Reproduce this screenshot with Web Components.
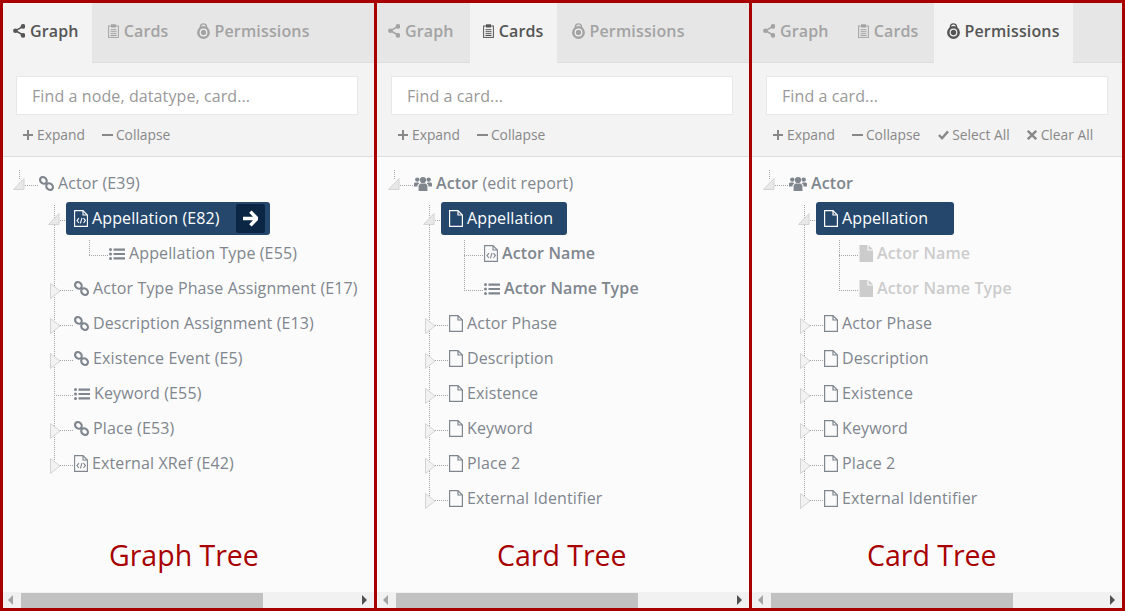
<!DOCTYPE html>
<html lang="en">
<head>
<meta charset="utf-8">
<title>Graph and card trees</title>
<style>
  html, body { margin: 0; background: #a80000; }
  body { font-family: "Open Sans", "Liberation Sans", sans-serif; }
</style>
</head>
<body>
<tree-compare>
  <tree-panel first caption="Graph Tree" style="--caption-x: 106px">
    <tab-item slot="tabs" icon="share" active first>Graph</tab-item>
    <tab-item slot="tabs" icon="clipboard">Cards</tab-item>
    <tab-item slot="tabs" icon="lock">Permissions</tab-item>
    <search-box slot="search" placeholder="Find a node, datatype, card..."></search-box>
    <action-link slot="actions" icon="plus">Expand</action-link>
    <action-link slot="actions" icon="minus">Collapse</action-link>
    <tree-node root toggle="open" icon="link">Actor (E39)
      <tree-node slot="kids" toggle="open" icon="code" selected go>Appellation (E82)
        <tree-node slot="kids" icon="list">Appellation Type (E55)</tree-node>
      </tree-node>
      <tree-node slot="kids" toggle="closed" icon="link">Actor Type Phase Assignment (E17)</tree-node>
      <tree-node slot="kids" toggle="closed" icon="link">Description Assignment (E13)</tree-node>
      <tree-node slot="kids" toggle="closed" icon="link">Existence Event (E5)</tree-node>
      <tree-node slot="kids" icon="list">Keyword (E55)</tree-node>
      <tree-node slot="kids" toggle="closed" icon="link">Place (E53)</tree-node>
      <tree-node slot="kids" toggle="closed" icon="code">External XRef (E42)</tree-node>
    </tree-node>
  </tree-panel>

  <tree-panel caption="Card Tree" style="--caption-x: 119px; --box-pad: 14px">
    <tab-item slot="tabs" icon="share" first>Graph</tab-item>
    <tab-item slot="tabs" icon="clipboard" active>Cards</tab-item>
    <tab-item slot="tabs" icon="lock">Permissions</tab-item>
    <search-box slot="search" placeholder="Find a card..."></search-box>
    <action-link slot="actions" icon="plus">Expand</action-link>
    <action-link slot="actions" icon="minus">Collapse</action-link>
    <tree-node root toggle="open" icon="users"><b>Actor</b> (edit report)
      <tree-node slot="kids" toggle="open" icon="file" selected>Appellation
        <tree-node slot="kids" icon="code"><b>Actor Name</b></tree-node>
        <tree-node slot="kids" icon="list"><b>Actor Name Type</b></tree-node>
      </tree-node>
      <tree-node slot="kids" toggle="closed" icon="file">Actor Phase</tree-node>
      <tree-node slot="kids" toggle="closed" icon="file">Description</tree-node>
      <tree-node slot="kids" toggle="closed" icon="file">Existence</tree-node>
      <tree-node slot="kids" toggle="closed" icon="file">Keyword</tree-node>
      <tree-node slot="kids" toggle="closed" icon="file">Place 2</tree-node>
      <tree-node slot="kids" toggle="closed" icon="file">External Identifier</tree-node>
    </tree-node>
  </tree-panel>

  <tree-panel caption="Card Tree" style="--caption-x: 114px; --box-pad: 26px">
    <tab-item slot="tabs" icon="share" first>Graph</tab-item>
    <tab-item slot="tabs" icon="clipboard">Cards</tab-item>
    <tab-item slot="tabs" icon="lock" active>Permissions</tab-item>
    <search-box slot="search" placeholder="Find a card..."></search-box>
    <action-link slot="actions" icon="plus">Expand</action-link>
    <action-link slot="actions" icon="minus">Collapse</action-link>
    <action-link slot="actions" icon="check">Select All</action-link>
    <action-link slot="actions" icon="cross">Clear All</action-link>
    <tree-node root toggle="open" icon="users"><b>Actor</b>
      <tree-node slot="kids" toggle="open" icon="file" selected>Appellation
        <tree-node slot="kids" icon="solid" muted><b>Actor Name</b></tree-node>
        <tree-node slot="kids" icon="solid" muted><b>Actor Name Type</b></tree-node>
      </tree-node>
      <tree-node slot="kids" toggle="closed" icon="file">Actor Phase</tree-node>
      <tree-node slot="kids" toggle="closed" icon="file">Description</tree-node>
      <tree-node slot="kids" toggle="closed" icon="file">Existence</tree-node>
      <tree-node slot="kids" toggle="closed" icon="file">Keyword</tree-node>
      <tree-node slot="kids" toggle="closed" icon="file">Place 2</tree-node>
      <tree-node slot="kids" toggle="closed" icon="file">External Identifier</tree-node>
    </tree-node>
  </tree-panel>
</tree-compare>

<script>
const pageOutline = 'M.6 .6H9L13.4 5V16.4H.6Z';
const icons = {
  share: [12, 14, `<path d="M10 2.5 2.5 6.7 10 11" fill="none" stroke="currentColor" stroke-width="1.5"/>
    <circle cx="10" cy="2.4" r="2.3" fill="currentColor"/><circle cx="2.4" cy="6.7" r="2.3" fill="currentColor"/><circle cx="10" cy="11.4" r="2.3" fill="currentColor"/>`],
  clipboard: [11, 14, `<rect x=".6" y="2" width="9.8" height="11.4" fill="none" stroke="currentColor"/>
    <rect x="3" y=".3" width="5" height="3.2" fill="currentColor"/>
    <path d="M2.5 5.7H8.5M2.5 7.7H8.5M2.5 9.7H8.5M2.5 11.5H8.5" stroke="currentColor"/>`],
  lock: [13, 16, `<path d="M3.4 6V4a3.1 3.1 0 0 1 6.2 0V6" fill="none" stroke="currentColor" stroke-width="1.4"/>
    <circle cx="6.5" cy="9.5" r="6.4" fill="currentColor"/><circle cx="6.5" cy="9.5" r="3.9" fill="#f3f3f3"/><circle cx="6.5" cy="9.5" r="2.7" fill="currentColor"/>`],
  link: [15, 15, `<g fill="none" stroke="currentColor" stroke-width="2.2">
    <ellipse cx="4.4" cy="4.4" rx="3.6" ry="3" transform="rotate(45 4.4 4.4)"/>
    <ellipse cx="10.6" cy="10.6" rx="3.6" ry="3" transform="rotate(45 10.6 10.6)"/>
    <path d="M6.8 6.8 8.2 8.2"/></g>`],
  code: [14, 17, `<path d="${pageOutline}M9 .6V5H13.4" fill="none" stroke="currentColor" stroke-width="1.1"/>
    <path d="M4.9 8.2 3 10.6 4.9 13M9.5 8.2 11.4 10.6 9.5 13M8 7.8 6.4 13.4" fill="none" stroke="currentColor" stroke-width="1.1"/>`],
  file: [14, 17, `<path d="${pageOutline}M9 .6V5H13.4" fill="none" stroke="currentColor" stroke-width="1.2"/>`],
  solid: [14, 17, `<path d="M.5 0H8.4V5.6H14V17H.5ZM9.6 0 14 4.4H9.6Z" fill="currentColor"/>`],
  list: [16, 12, `<circle cx="1.5" cy="1.6" r="1.5" fill="currentColor"/><circle cx="1.5" cy="6" r="1.5" fill="currentColor"/><circle cx="1.5" cy="10.4" r="1.5" fill="currentColor"/>
    <path d="M4.5 1.6H16M4.5 6H16M4.5 10.4H16" stroke="currentColor" stroke-width="2.2"/>`],
  users: [18, 15, `<g fill="currentColor"><circle cx="9" cy="4" r="3.1"/><circle cx="3.3" cy="3.6" r="2.2"/><circle cx="14.7" cy="3.6" r="2.2"/>
    <path d="M4.6 15V10.4C4.6 8.4 6 7.4 7 7.4H11C12 7.4 13.4 8.4 13.4 10.4V15Z"/>
    <path d="M0 10.5V8C0 6.8 1 6.4 1.8 6.4H4.4C4.6 7 5 7.3 5.4 7.5 4 8 3.4 9.2 3.4 10.5ZM18 10.5V8C18 6.8 17 6.4 16.2 6.4H13.6C13.4 7 13 7.3 12.6 7.5 14 8 14.6 9.2 14.6 10.5Z"/></g>`],
  plus: [10, 10, `<path d="M5 0V10M0 5H10" stroke="currentColor" stroke-width="2"/>`],
  minus: [11, 10, `<path d="M0 5H11" stroke="currentColor" stroke-width="2"/>`],
  check: [11, 10, `<path d="M1 5 4 8.2 10 1.4" fill="none" stroke="currentColor" stroke-width="2.4"/>`],
  cross: [10, 10, `<path d="M.8 .8 9.2 9.2M9.2 .8 .8 9.2" stroke="currentColor" stroke-width="2.3"/>`],
  arrow: [16, 17, `<path d="M8.4 1.6 15 8.5 8.4 15.4M14 8.5H1" fill="none" stroke="currentColor" stroke-width="3.4"/>`]
};

class UiIcon extends HTMLElement {
  connectedCallback() {
    const [w, h, body] = icons[this.getAttribute('name')];
    this.attachShadow({ mode: 'open' }).innerHTML = `
      <style>:host { display: block; flex: none; line-height: 0; }</style>
      <svg width="${w}" height="${h}" viewBox="0 0 ${w} ${h}">${body}</svg>`;
  }
}

class TabItem extends HTMLElement {
  connectedCallback() {
    this.attachShadow({ mode: 'open' }).innerHTML = `
      <style>
        :host { display: flex; align-items: center; height: 60px; margin-bottom: -1px; padding: 0 13px 5px 13px; box-sizing: border-box;
          font-size: 16px; font-weight: 600; letter-spacing: .15px; color: #a3a3a3; cursor: pointer; }
        :host([first]) { padding-left: 10px; margin-right: 3px; }
        :host([active]) { background: #f3f3f3; color: #555; height: 61px; padding-bottom: 6px; }
        :host(:not([first])) { margin-right: 2px; }
        ui-icon { margin-right: 5px; }
      </style>
      <ui-icon name="${this.getAttribute('icon')}"></ui-icon><slot></slot>`;
  }
}

class SearchBox extends HTMLElement {
  connectedCallback() {
    this.attachShadow({ mode: 'open' }).innerHTML = `
      <style>
        :host { display: block; }
        input { display: block; width: 100%; height: 39px; box-sizing: border-box; padding: 0 15px; border: 1px solid #e8e8e8; background: #fff;
          font: 16px "Open Sans", "Liberation Sans", sans-serif; letter-spacing: .1px; color: #555; outline: none; }
        input::placeholder { color: #999; opacity: 1; }
      </style>
      <input type="text" placeholder="${this.getAttribute('placeholder')}">`;
  }
}

class ActionLink extends HTMLElement {
  connectedCallback() {
    this.attachShadow({ mode: 'open' }).innerHTML = `
      <style>
        :host { display: flex; align-items: center; gap: 4px; font-size: 13.8px; color: #888; cursor: pointer; }
        :host([icon="minus"]), :host([icon="check"]) { gap: 3px; }
        :host([icon="check"]) { margin-left: 1px; }
        span { margin-bottom: 2px; }
      </style>
      <ui-icon name="${this.getAttribute('icon')}"></ui-icon><span><slot></slot></span>`;
  }
}

class TreeNode extends HTMLElement {
  connectedCallback() {
    const toggle = this.getAttribute('toggle');
    const isRoot = this.hasAttribute('root');
    const shape = toggle === 'open'
      ? '<path d="M.5 23.5 11 12.5V23.5Z" fill="#e8e8e8" stroke="#d4d4d4"/>'
      : toggle === 'closed' ? '<path d="M2.5 12.5 12 20 2.5 27.5Z" fill="#f2f2f2" stroke="#d4d4d4"/>' : '';
    this.attachShadow({ mode: 'open' }).innerHTML = `
      <style>
        :host { display: block; color: #7f868e; font-size: 16px; letter-spacing: .12px; }
        :host([muted]) { color: #ccc; }
        .row { display: flex; align-items: center; height: 35px; white-space: nowrap; }
        .gutter { flex: none; margin-left: -6px; }
        .label { display: flex; align-items: center; gap: 4px; }
        .text { margin-bottom: 2px; }
        :host([selected]) .label { height: 33px; margin-left: -8px; padding: 0 var(--box-pad, 25px) 0 8px; background: #25476b; border-radius: 3px; color: #fff; }
        :host([go]) .label { padding-right: 5px; }
        .go { display: flex; align-items: center; justify-content: center; width: 29px; height: 29px; margin-left: 12px; background: #0b2644; border-radius: 2px; }
        ::slotted(b) { font-weight: 600; }
        .kids { margin-left: 35px; background: repeating-linear-gradient(#a5a5a5 0 1px, transparent 1px 2px) 0 4px / 1px calc(100% - 20px) no-repeat; }
      </style>
      <div class="row">
        <svg class="gutter" width="26" height="35" viewBox="0 0 26 35">
          ${isRoot ? '<path d="M6.5 4V13" stroke="#a5a5a5" stroke-dasharray="1 1"/>' : ''}
          <path d="M6 19.5H26" stroke="#a5a5a5" stroke-dasharray="1 1"/>
          ${shape}
        </svg>
        <div class="label">
          <ui-icon name="${this.getAttribute('icon')}"></ui-icon>
          <span class="text"><slot></slot></span>
          ${this.hasAttribute('go') ? '<div class="go"><ui-icon name="arrow"></ui-icon></div>' : ''}
        </div>
      </div>
      <div class="kids"><slot name="kids"></slot></div>`;
  }
}

class PanelScrollbar extends HTMLElement {
  connectedCallback() {
    this.attachShadow({ mode: 'open' }).innerHTML = `
      <style>
        :host { display: flex; align-items: center; height: 16px; background: #f1f1f1; flex: none; }
        .left { margin-left: calc(5px + var(--lead)); border: 5px solid transparent; border-right: 5px solid #a3a3a3; border-left: 0; }
        .thumb { margin-left: 8px; width: 242px; height: 15px; align-self: flex-end; background: #c1c1c1; }
        .right { margin-left: auto; margin-right: 7px; border: 5px solid transparent; border-left: 5px solid #505050; border-right: 0; }
      </style>
      <div class="left"></div><div class="thumb"></div><div class="right"></div>`;
  }
}

class TreePanel extends HTMLElement {
  connectedCallback() {
    this.attachShadow({ mode: 'open' }).innerHTML = `
      <style>
        :host { display: flex; flex-direction: column; min-width: 0; height: 605px; box-sizing: border-box;
          border-left: 3px solid #a80000; background: #fbfbfb; --lead: 1px; }
        :host([first]) { --lead: 0px; }
        .tabs { display: flex; height: 60px; padding-left: var(--lead); box-sizing: border-box; flex: none; background: #e6e6e6; border-bottom: 1px solid #ddd; }
        .tools { flex: none; height: 94px; box-sizing: border-box; padding: 13px 0 0 calc(13px + var(--lead)); background: #f3f3f3; border-bottom: 1px solid #ddd; }
        .search { width: 342px; }
        .actions { display: flex; align-items: center; gap: 17px; height: 40px; padding-left: 7px; }
        .tree { flex: 1; padding: 9px 0 0 calc(16px + var(--lead)); overflow: hidden; }
        .caption { flex: none; margin-left: calc(var(--caption-x) + var(--lead)); padding-bottom: 16px; line-height: 42px; font-size: 28.5px; color: #a80000; }
      </style>
      <div class="tabs"><slot name="tabs"></slot></div>
      <div class="tools">
        <div class="search"><slot name="search"></slot></div>
        <div class="actions"><slot name="actions"></slot></div>
      </div>
      <div class="tree"><slot></slot></div>
      <div class="caption">${this.getAttribute('caption')}</div>
      <panel-scrollbar></panel-scrollbar>`;
  }
}

class TreeCompare extends HTMLElement {
  constructor() {
    super();
    this.attachShadow({ mode: 'open' }).innerHTML = `
      <style>
        :host { display: grid; grid-template-columns: 374px 375px 373px; width: 1125px; height: 611px; box-sizing: border-box;
          border: solid #a80000; border-width: 3px 3px 3px 0; overflow: hidden; }
      </style>
      <slot></slot>`;
  }
}

customElements.define('ui-icon', UiIcon);
customElements.define('tab-item', TabItem);
customElements.define('search-box', SearchBox);
customElements.define('action-link', ActionLink);
customElements.define('tree-node', TreeNode);
customElements.define('panel-scrollbar', PanelScrollbar);
customElements.define('tree-panel', TreePanel);
customElements.define('tree-compare', TreeCompare);
</script>
</body>
</html>
